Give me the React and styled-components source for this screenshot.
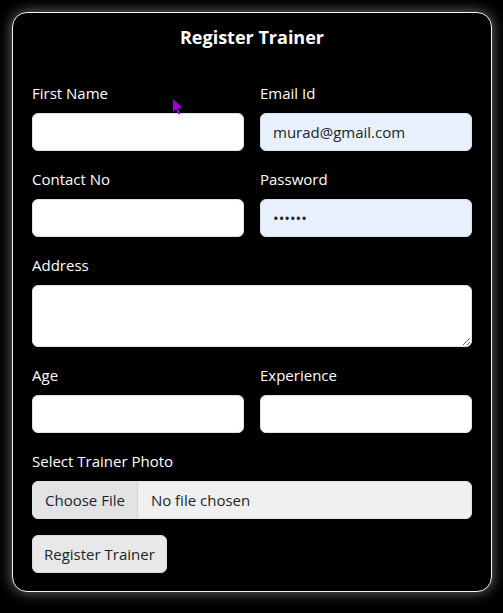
import React from 'react';
import styled, { createGlobalStyle } from 'styled-components';

const GlobalStyle = createGlobalStyle`
  * { box-sizing: border-box; }
  html, body {
    margin: 0;
    background: #000;
  }
  body {
    font-family: "Open Sans", "Noto Sans", "Liberation Sans", sans-serif;
    color: #fff;
  }
`;

const Page = styled.div`
  position: relative;
  width: 503px;
  height: 613px;
  padding: 12px 11px 0 12px;
  background: #000;
`;

const Card = styled.form`
  width: 480px;
  height: 580px;
  border: 1px solid #f2f2f2;
  border-radius: 15px;
  padding: 11px 19px 19px;
  background: #000;
  box-shadow: 0 0 14px rgba(255, 255, 255, 0.45);
`;

const Title = styled.h2`
  margin: 0 0 31px;
  font-size: 18px;
  line-height: 26px;
  font-weight: 700;
  text-align: center;
`;

const Row = styled.div`
  display: grid;
  grid-template-columns: ${p => (p.$cols === 1 ? '1fr' : '1fr 1fr')};
  column-gap: 16px;
`;

const Field = styled.div`
  margin-bottom: 16px;
`;

const Label = styled.label`
  display: block;
  margin-bottom: 8px;
  font-size: 15px;
  line-height: 24px;
  color: #fff;
`;

const Input = styled.input`
  display: block;
  width: 100%;
  height: 38px;
  padding: 6px 12px;
  font-family: inherit;
  font-size: 15px;
  line-height: 24px;
  color: #212529;
  background: ${p => (p.$filled ? '#e8f0fe' : '#fff')};
  border: 1px solid #dee2e6;
  border-radius: 6px;
  outline: none;
`;

const TextArea = styled.textarea`
  display: block;
  width: 100%;
  height: 62px;
  padding: 6px 12px;
  font-family: inherit;
  font-size: 15px;
  line-height: 24px;
  color: #212529;
  background: #fff;
  border: 1px solid #dee2e6;
  border-radius: 6px;
  resize: vertical;
  outline: none;
`;

const FileBox = styled.div`
  display: flex;
  align-items: stretch;
  height: 38px;
  border: 1px solid #dee2e6;
  border-radius: 6px;
  overflow: hidden;
  background: #f0f0f0;
  font-size: 15px;
  color: #212529;
`;

const FileButton = styled.span`
  display: flex;
  align-items: center;
  padding: 0 12px;
  background: #e3e3e5;
  border-right: 1px solid #cfd2d6;
`;

const FileName = styled.span`
  display: flex;
  align-items: center;
  padding: 0 13px;
`;

const SubmitButton = styled.button`
  display: block;
  height: 38px;
  padding: 0 11px;
  font-family: inherit;
  font-size: 15px;
  color: #212529;
  background: #e8e8e8;
  border: 1px solid #dcdcdc;
  border-radius: 6px;
`;

const Cursor = styled.svg`
  position: absolute;
  left: 172px;
  top: 98px;
`;

export default function App() {
  return (
    <>
      <GlobalStyle />
      <Page>
        <Card onSubmit={e => e.preventDefault()}>
          <Title>Register Trainer</Title>

          <Row>
            <Field>
              <Label>First Name</Label>
              <Input type="text" />
            </Field>
            <Field>
              <Label>Email Id</Label>
              <Input type="email" $filled defaultValue="murad@gmail.com" />
            </Field>
          </Row>

          <Row>
            <Field>
              <Label>Contact No</Label>
              <Input type="text" />
            </Field>
            <Field>
              <Label>Password</Label>
              <Input type="password" $filled defaultValue="123456" />
            </Field>
          </Row>

          <Row $cols={1}>
            <Field>
              <Label>Address</Label>
              <TextArea rows={2} />
            </Field>
          </Row>

          <Row>
            <Field>
              <Label>Age</Label>
              <Input type="text" />
            </Field>
            <Field>
              <Label>Experience</Label>
              <Input type="text" />
            </Field>
          </Row>

          <Row $cols={1}>
            <Field>
              <Label>Select Trainer Photo</Label>
              <FileBox>
                <FileButton>Choose File</FileButton>
                <FileName>No file chosen</FileName>
              </FileBox>
            </Field>
          </Row>

          <SubmitButton type="submit">Register Trainer</SubmitButton>
        </Card>
        <Cursor width="12" height="18" viewBox="0 0 12 18">
          <path d="M1 1 L1 14 L4 11 L6.5 16.5 L8.5 15.6 L6 10.3 L10.5 10.3 Z" fill="#a000d8" />
        </Cursor>
      </Page>
    </>
  );
}
